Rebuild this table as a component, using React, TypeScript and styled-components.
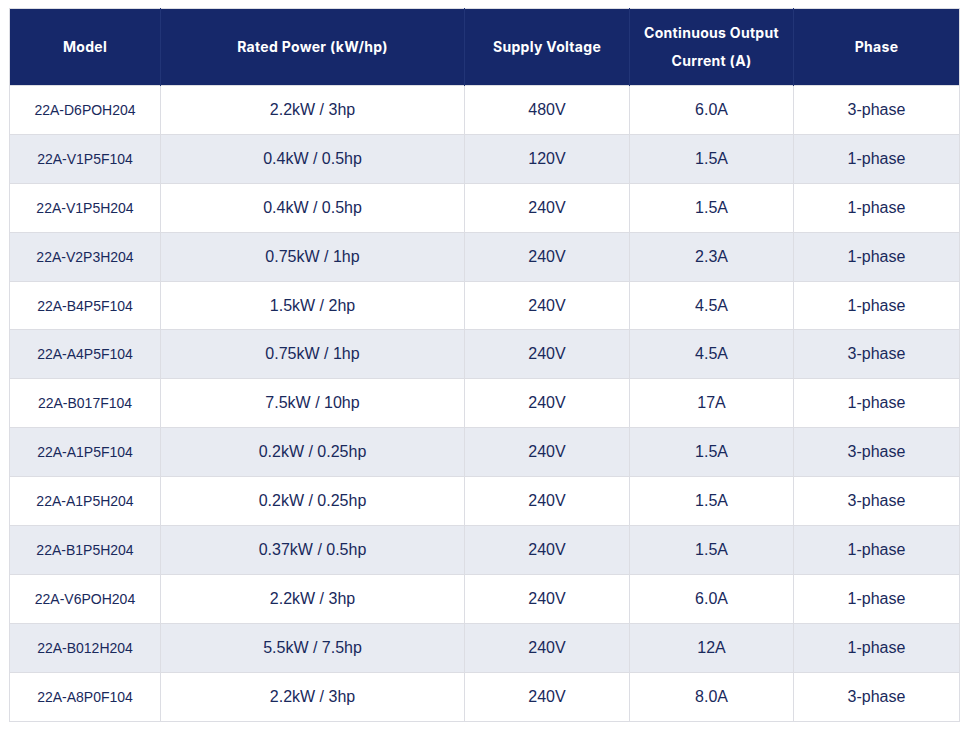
import styled, { createGlobalStyle } from 'styled-components'

const GlobalStyle = createGlobalStyle`
  body {
    margin: 0;
    background: #ffffff;
  }
  th, td {
    box-sizing: border-box;
  }
`

const Wrapper = styled.div`
  padding: 8px 9px;
`

const Table = styled.table`
  width: 950px;
  border-collapse: collapse;
  border: 1px solid #dcdde3;
  table-layout: fixed;
`

const HeadCell = styled.th<{ $w: number }>`
  width: ${(p) => p.$w}px;
  padding: 10px 12px;
  background: #16286a;
  color: #ffffff;
  font-family: Inter, "Open Sans", sans-serif;
  font-weight: 700;
  font-size: 14px;
  letter-spacing: 0.3px;
  line-height: 28px;
  text-align: center;
  border-left: 1px solid #223577;
  &:first-child {
    border-left: none;
  }
`

const Row = styled.tr<{ $striped: boolean }>`
  height: 48.9px;
  background: ${(p) => (p.$striped ? '#e8ebf2' : '#ffffff')};
`

const Cell = styled.td<{ $small?: boolean }>`
  padding: 0 8px;
  border: 1px solid #dcdde3;
  color: #19295c;
  font-family: "Liberation Sans", Arial, sans-serif;
  font-size: ${(p) => (p.$small ? '14px' : '16px')};
  text-align: center;
  vertical-align: middle;
`

const columns = [
  { label: 'Model', w: 151 },
  { label: 'Rated Power (kW/hp)', w: 304 },
  { label: 'Supply Voltage', w: 165 },
  { label: 'Continuous Output Current (A)', w: 164 },
  { label: 'Phase', w: 166 },
]

const rows = [
  ['22A-D6POH204', '2.2kW / 3hp', '480V', '6.0A', '3-phase'],
  ['22A-V1P5F104', '0.4kW / 0.5hp', '120V', '1.5A', '1-phase'],
  ['22A-V1P5H204', '0.4kW / 0.5hp', '240V', '1.5A', '1-phase'],
  ['22A-V2P3H204', '0.75kW / 1hp', '240V', '2.3A', '1-phase'],
  ['22A-B4P5F104', '1.5kW / 2hp', '240V', '4.5A', '1-phase'],
  ['22A-A4P5F104', '0.75kW / 1hp', '240V', '4.5A', '3-phase'],
  ['22A-B017F104', '7.5kW / 10hp', '240V', '17A', '1-phase'],
  ['22A-A1P5F104', '0.2kW / 0.25hp', '240V', '1.5A', '3-phase'],
  ['22A-A1P5H204', '0.2kW / 0.25hp', '240V', '1.5A', '3-phase'],
  ['22A-B1P5H204', '0.37kW / 0.5hp', '240V', '1.5A', '1-phase'],
  ['22A-V6POH204', '2.2kW / 3hp', '240V', '6.0A', '1-phase'],
  ['22A-B012H204', '5.5kW / 7.5hp', '240V', '12A', '1-phase'],
  ['22A-A8P0F104', '2.2kW / 3hp', '240V', '8.0A', '3-phase'],
]

const App = () => {
  return (
    <Wrapper>
      <GlobalStyle />
      <Table>
        <thead>
          <tr>
            {columns.map((c) => (
              <HeadCell key={c.label} $w={c.w}>
                {c.label}
              </HeadCell>
            ))}
          </tr>
        </thead>
        <tbody>
          {rows.map((r, i) => (
            <Row key={r[0]} $striped={i % 2 === 1}>
              {r.map((v, j) => (
                <Cell key={j} $small={j === 0}>
                  {v}
                </Cell>
              ))}
            </Row>
          ))}
        </tbody>
      </Table>
    </Wrapper>
  )
}

export default App
